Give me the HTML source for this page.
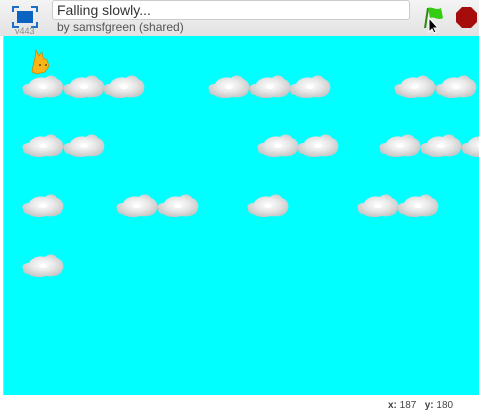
<!DOCTYPE html><html><head><style>
body{margin:0;width:479px;height:414px;background:#fff;position:relative;overflow:hidden;font-family:"Liberation Sans",sans-serif}
.hdr{position:absolute;left:0;top:0;width:479px;height:36px;background:linear-gradient(#f4f4f4,#e2e2e2)}
.stage{position:absolute;left:3px;top:36px;width:476px;height:359px;background:#00ffff;border-left:1px solid #ccc}
</style></head><body>
<div class="hdr">
<svg style="position:absolute;left:12px;top:6px" width="26" height="22"><path d="M1 6V1h6M19 1h6v5M25 16v5h-6M7 21H1v-5" stroke="#1b6fc4" stroke-width="2" fill="none"/><rect x="5" y="5" width="16" height="12" fill="#0a64c0"/></svg>
<div style="position:absolute;left:15px;top:26px;font-size:9px;color:#888">v443</div>
<div style="position:absolute;left:52px;top:0;width:352px;height:18px;background:#fff;border:1px solid #ccc;border-radius:3px;font-size:14px;line-height:18px;padding-left:4px;color:#333">Falling slowly...</div>
<div style="position:absolute;left:57px;top:20px;font-size:12px;color:#555">by samsfgreen (shared)</div>
<svg style="position:absolute;left:422px;top:4px" width="28" height="30"><path d="M3 24L6 4" stroke="#2a8a10" stroke-width="2"/><path d="M6 4c4-2 8 3 13 0l2 10c-5 3-9-2-13 0z" fill="#33cc11"/><path d="M7 14v14l3-3 2 4 2-1-2-4h4z" fill="#000" stroke="#fff" stroke-width="1"/></svg>
<svg style="position:absolute;left:456px;top:7px" width="21" height="21"><polygon points="6,0 15,0 21,6 21,15 15,21 6,21 0,15 0,6" fill="#a50d0d"/></svg>
</div>
<div class="stage"></div>
<svg width="479" height="414" style="position:absolute;left:0;top:0">
<defs><radialGradient id="g" cx="0.5" cy="0.45" r="0.55"><stop offset="0" stop-color="#fff"/><stop offset="0.5" stop-color="#e8e8e8"/><stop offset="1" stop-color="#c8c8c8"/></radialGradient>
<g id="cl"><path d="M2 18c-2-4 2-6 6-6 2-5 10-8 16-6 4-4 10-3 12 1 6 2 8 8 5 13-2 5-10 6-16 5-6 2-14 1-18-2-3 0-5-2-5-5z" fill="url(#g)"/><ellipse cx="22" cy="15" rx="4" ry="2" fill="#fff"/></g></defs>
<g transform="translate(0,72)"><use href="#cl" x="21"/><use href="#cl" x="62"/><use href="#cl" x="102"/><use href="#cl" x="207"/><use href="#cl" x="248"/><use href="#cl" x="288"/><use href="#cl" x="393"/><use href="#cl" x="434"/></g>
<g transform="translate(0,131)"><use href="#cl" x="21"/><use href="#cl" x="62"/><use href="#cl" x="256"/><use href="#cl" x="296"/><use href="#cl" x="378"/><use href="#cl" x="419"/><use href="#cl" x="460"/></g>
<g transform="translate(0,191)"><use href="#cl" x="21"/><use href="#cl" x="115"/><use href="#cl" x="156"/><use href="#cl" x="246"/><use href="#cl" x="356"/><use href="#cl" x="396"/></g>
<g transform="translate(0,251)"><use href="#cl" x="21"/></g>
<path d="M36 50l3 6 3-4 1 6 4 2 2 6-4 6-8 2-5-2 1-6 2-8z" fill="#f9b417" stroke="#c98300" stroke-width="0.7"/>
<circle cx="40" cy="65" r="0.8"/><circle cx="46" cy="65" r="0.8"/>
</svg>
<div style="position:absolute;left:388px;top:400px;font-size:10px;color:#444"><b>x:</b> 187 &nbsp;&nbsp;<b>y:</b> 180</div>
</body></html>
